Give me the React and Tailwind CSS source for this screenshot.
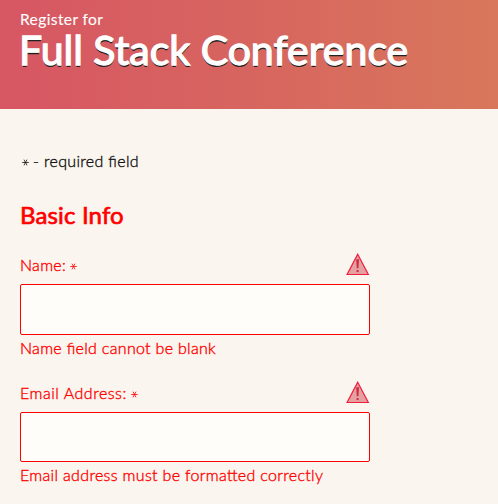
function WarningIcon() {
  return (
    <svg className="mt-px block h-6 w-6" viewBox="0 0 24 24">
      <path d="M11.7 1.2 L22.3 21.5 H1.1 Z" fill="#e5a0a2" stroke="#f21d3d" strokeWidth="1.2" />
      <path d="M10.2 6.3 h2.8 l-.6 9 h-1.6 z" fill="#c72e45" />
      <rect x="10.6" y="17" width="2" height="2.1" fill="#c72e45" />
    </svg>
  );
}

function Field({ label, labelClass, error, errorClass, inputClass }) {
  return (
    <div className="w-[350px]">
      <div className="flex h-8 items-start justify-between">
        <label className="flex items-start gap-1 pt-px leading-6">
          <span className={labelClass}>{label}</span>
          <Asterisk />
        </label>
        <WarningIcon />
      </div>
      <input
        className={`block w-full rounded-[2px] border border-[#ff0000] bg-[#fffdf9] outline-none ${inputClass}`}
      />
      <p className="pt-px leading-6">
        <span className={errorClass}>{error}</span>
      </p>
    </div>
  );
}

function Asterisk() {
  return (
    <svg className="mt-[10px] block h-[7px] w-[7px]" viewBox="0 0 7 7" fill="none" stroke="currentColor" strokeWidth="0.8" strokeLinecap="round">
      <path d="M.6 3.5 H6.4 M2.2 1 L4.8 6 M4.8 1 L2.2 6" />
    </svg>
  );
}

export default function App() {
  return (
    <div className="h-[504px] w-[498px] overflow-hidden bg-[#faf5ee] font-['Lato',sans-serif] text-base font-light whitespace-nowrap text-[#ff0000] [font-feature-settings:'liga'_1] [-webkit-text-stroke:0.35px_currentColor]">
      <header className="h-[109px] bg-linear-to-r from-[#d75663] via-[#d7655f] to-[#d8775b] pt-[9px] pl-5 text-white">
        <p className="h-5 text-[15.5px] leading-5 font-normal tracking-[0.4px] [-webkit-text-stroke:0.1px_white]">
          Register for
        </p>
        <h1 className="-ml-px text-[41px] leading-[41px] font-normal [text-shadow:0_1.5px_0.5px_#222] [-webkit-text-stroke:1.3px_white]">
          Full Stack Conference
        </h1>
      </header>
      <main className="pt-10 pl-5">
        <p className="flex gap-1 pl-0.5 leading-6 text-[#111]">
          <Asterisk />
          <span className="tracking-[0.33px]">- required field</span>
        </p>
        <h2 className="mt-[26px] text-2xl leading-8 font-normal tracking-[0.15px] [-webkit-text-stroke:0.7px_currentColor]">
          Basic Info
        </h2>
        <div className="mt-[21px]">
          <Field label="Name:" labelClass="tracking-[0.3px]" error="Name field cannot be blank" errorClass="tracking-[0.31px]" inputClass="h-[51px]" />
        </div>
        <div className="mt-5">
          <Field label="Email Address:" labelClass="tracking-[0.52px]" error="Email address must be formatted correctly" errorClass="tracking-[0.33px]" inputClass="h-[50px]" />
        </div>
      </main>
    </div>
  );
}
